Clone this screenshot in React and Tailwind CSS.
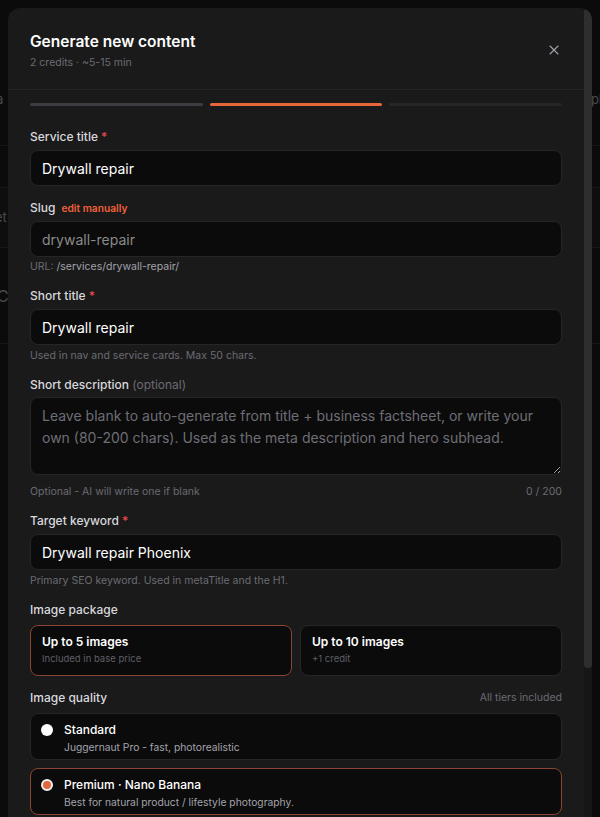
import React from "react";
import { X } from "lucide-react";

/* ─── faint page behind the dialog ─── */
const BackdropPage = () => (
  <div className="flex flex-col text-[13px] text-[#4a4a4a]">
    <div className="h-[80px]" />
    <div className="h-[40px] flex items-center justify-between">
      <span className="-ml-[4px]">a</span>
      <span className="-mr-[2px]">pl</span>
    </div>
    <div className="h-[26px] border-b border-[#161616]" />
    <div className="h-[42px] border-b border-[#161616]" />
    <div className="h-[60px] flex items-center border-b border-[#161616] bg-[#0e0e0e]">
      <span className="-ml-[5px]">et</span>
    </div>
    <div className="h-[96px] flex items-center border-b border-[#161616]">
      <span className="-ml-[3px] text-[16px]">C</span>
    </div>
  </div>
);

const Label = ({ children, required, extra }) => (
  <div className="h-[18px] flex items-center gap-[6px] text-[12px] font-medium text-[#d8d8de] leading-[18px]">
    <span>
      {children}
      {required && <span className="text-[#e5484d] ml-[3px]">*</span>}
    </span>
    {extra}
  </div>
);

const Helper = ({ children, className = "" }) => (
  <p className={`text-[10.5px] leading-[14px] text-[#6b6b73] ${className}`}>{children}</p>
);

const TextInput = ({ value, muted }) => (
  <input
    readOnly
    value={value}
    className={`mt-[4px] h-[36px] w-full rounded-lg border border-[#262626] bg-[#0b0b0b] px-[11px] text-[14px] outline-none ${
      muted ? "text-[#8a8a8a]" : "text-white"
    }`}
  />
);

const PackageCard = ({ title, sub, active }) => (
  <div
    className={`h-[51px] rounded-lg border bg-[#0b0b0b] px-[11px] pt-[7px] ${
      active ? "border-[#8b4530]" : "border-[#262626]"
    }`}
  >
    <div className="text-[12px] font-semibold text-white leading-[18px]">{title}</div>
    <div className="text-[9.5px] text-[#5f5f68] leading-[16px]">{sub}</div>
  </div>
);

const QualityOption = ({ title, sub, active }) => (
  <div
    className={`h-[47px] rounded-lg border bg-[#0b0b0b] pl-[10px] pt-[7px] flex gap-[11px] ${
      active ? "border-[#8b4530]" : "border-[#262626]"
    }`}
  >
    <span
      className={`mt-[3px] h-[12px] w-[12px] rounded-full shrink-0 ${
        active ? "bg-[#e2673f] border-[2px] border-[#f2f2f2]" : "bg-white"
      }`}
    />
    <div>
      <div className="text-[12px] font-medium text-white leading-[18px]">{title}</div>
      <div className="text-[10.3px] text-[#a3a3ab] leading-[16px]">{sub}</div>
    </div>
  </div>
);

export default function App() {
  return (
    <div
      className="relative h-[817px] w-[600px] overflow-hidden bg-[#0b0b0b]"
      style={{ fontFamily: "Inter, 'Noto Sans', sans-serif" }}
    >
      <BackdropPage />

      {/* ── Dialog ── */}
      <div className="absolute left-[8px] top-[8px] w-[584px] h-[830px] flex rounded-xl overflow-hidden bg-[#1a1a1a]">
        <div className="flex-1 flex flex-col">
          {/* header */}
          <div className="h-[82px] border-b border-[#242424] px-[22px] pt-[22px] flex justify-between">
            <div>
              <h2 className="text-[15.5px] font-semibold text-white leading-[24px]">Generate new content</h2>
              <p className="text-[10.5px] text-[#6b6b73] leading-[16px] mt-[1px]">2 credits · ~5-15 min</p>
            </div>
            <button className="mt-[12px] h-[16px] text-[#a1a1aa]">
              <X size={16} strokeWidth={1.6} />
            </button>
          </div>

          {/* steps */}
          <div className="px-[22px] pt-[13px]">
            <div className="grid grid-cols-3 gap-[7px]">
              <div className="h-[3px] rounded-full bg-[#3c3c42]" />
              <div className="h-[3px] rounded-full bg-[#e8673a]" />
              <div className="h-[3px] rounded-full bg-[#262626]" />
            </div>
          </div>

          {/* form */}
          <div className="px-[22px] pt-[22px] flex flex-col gap-[13px]">
            <div className="flex flex-col">
              <Label required>Service title</Label>
              <TextInput value="Drywall repair" />
            </div>

            <div className="flex flex-col">
              <Label
                extra={<span className="text-[10.2px] font-semibold text-[#f0603c]">edit manually</span>}
              >
                Slug
              </Label>
              <TextInput value="drywall-repair" muted />
              <Helper className="mt-[3px]">
                URL: <span className="text-[#a1a1aa]">/services/drywall-repair/</span>
              </Helper>
            </div>

            <div className="flex flex-col">
              <Label required>Short title</Label>
              <TextInput value="Drywall repair" />
              <Helper className="mt-[4px]">Used in nav and service cards. Max 50 chars.</Helper>
            </div>

            <div className="flex flex-col">
              <Label>
                Short description <span className="font-normal text-[#6b6b73]">(optional)</span>
              </Label>
              <textarea
                readOnly
                placeholder="Leave blank to auto-generate from title + business factsheet, or write your own (80-200 chars). Used as the meta description and hero subhead."
                className="mt-[3px] h-[78px] w-full rounded-lg border border-[#262626] bg-[#0b0b0b] px-[11px] py-[7px] text-[14px] leading-[22px] text-white placeholder:text-[#6e6e76] outline-none"
              />
              <div className="mt-[10px] flex justify-between">
                <Helper>Optional - AI will write one if blank</Helper>
                <Helper>0 / 200</Helper>
              </div>
            </div>

            <div className="flex flex-col">
              <Label required>Target keyword</Label>
              <TextInput value="Drywall repair Phoenix" />
              <Helper className="mt-[4px]">Primary SEO keyword. Used in metaTitle and the H1.</Helper>
            </div>

            <div className="flex flex-col">
              <Label>Image package</Label>
              <div className="mt-[6px] grid grid-cols-2 gap-2">
                <PackageCard title="Up to 5 images" sub="Included in base price" active />
                <PackageCard title="Up to 10 images" sub="+1 credit" />
              </div>
            </div>

            <div className="flex flex-col">
              <div className="flex justify-between items-center">
                <Label>Image quality</Label>
                <span className="text-[10.5px] text-[#6b6b73]">All tiers included</span>
              </div>
              <div className="mt-[6px] flex flex-col gap-2">
                <QualityOption title="Standard" sub="Juggernaut Pro - fast, photorealistic" />
                <QualityOption
                  title="Premium · Nano Banana"
                  sub="Best for natural product / lifestyle photography."
                  active
                />
              </div>
            </div>
          </div>
        </div>

        {/* scrollbar */}
        <div className="w-[8px] bg-[#161616] flex flex-col">
          <div className="h-[660px] rounded-full bg-[#2e2e2e]" />
        </div>
      </div>
    </div>
  );
}
